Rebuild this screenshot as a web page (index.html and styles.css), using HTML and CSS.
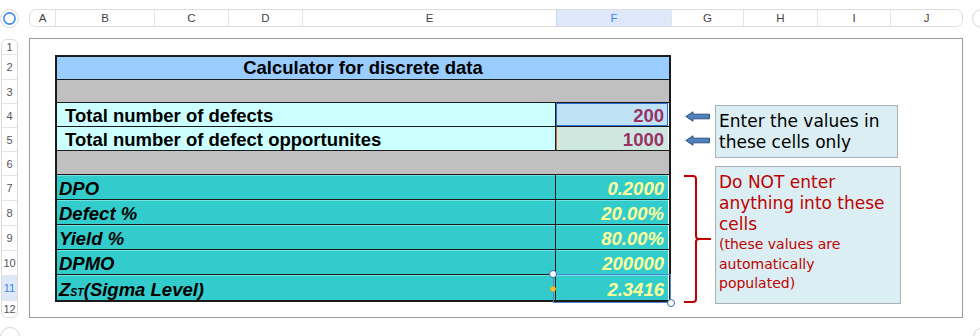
FILE: index.html
```html
<!DOCTYPE html>
<html>
<head>
<meta charset="utf-8">
<link rel="stylesheet" href="styles.css">
</head>
<body>
<div class="topbar">
  <svg class="corner" width="19" height="19" viewBox="0 0 19 19">
    <circle cx="9.5" cy="9.5" r="9" fill="#fff" stroke="#dadada" stroke-width="1"/>
    <circle cx="9.5" cy="9.5" r="5.6" fill="#fff" stroke="#3d8af0" stroke-width="1.6"/>
  </svg>
  <div class="colhead">
    <div class="ch c-a">A</div>
    <div class="ch c-b">B</div>
    <div class="ch c-c">C</div>
    <div class="ch c-d">D</div>
    <div class="ch c-e">E</div>
    <div class="ch c-f sel">F</div>
    <div class="ch c-g">G</div>
    <div class="ch c-h">H</div>
    <div class="ch c-i">I</div>
    <div class="ch c-j">J</div>
  </div>
  <div class="round-btn"></div>
</div>

<div class="main">
  <div class="rowhead">
    <div class="rh r1">1</div>
    <div class="rh r25">2</div>
    <div class="rh r24">3</div>
    <div class="rh r24">4</div>
    <div class="rh r24">5</div>
    <div class="rh r24">6</div>
    <div class="rh r25">7</div>
    <div class="rh r25">8</div>
    <div class="rh r25">9</div>
    <div class="rh r25">10</div>
    <div class="rh r25 sel">11</div>
    <div class="rh r12">12</div>
  </div>

  <div class="sheet">
    <div class="calc">
      <div class="row title">Calculator for discrete data</div>
      <div class="row gray g3"></div>
      <div class="row input">
        <div class="lab">Total number of defects</div>
        <div class="val v-blue">200</div>
      </div>
      <div class="row input">
        <div class="lab">Total number of defect opportunites</div>
        <div class="val v-green">1000</div>
      </div>
      <div class="row gray g6"></div>
      <div class="row out">
        <div class="lab">DPO</div>
        <div class="val">0.2000</div>
      </div>
      <div class="row out">
        <div class="lab">Defect %</div>
        <div class="val">20.00%</div>
      </div>
      <div class="row out">
        <div class="lab">Yield %</div>
        <div class="val">80.00%</div>
      </div>
      <div class="row out">
        <div class="lab">DPMO</div>
        <div class="val">200000</div>
      </div>
      <div class="row out last">
        <div class="lab"><span>Z<span class="sub">ST</span>(Sigma Level)</span></div>
        <div class="val selected">2.3416
          <div class="selbox">
            <span class="handle h-tl"></span>
            <span class="handle h-ml"></span>
            <span class="handle h-br"></span>
          </div>
        </div>
      </div>
    </div>

    <div class="notes">
      <div class="note">
        <div class="arrows">
          <svg width="26" height="11" viewBox="0 0 26 11"><path d="M0.8 5.5 L8 0.8 V3.2 H24.5 V7.8 H8 V10.2 Z" fill="#4f81bd" stroke="#2f527f" stroke-width="1" stroke-linejoin="round"/></svg>
          <svg width="26" height="11" viewBox="0 0 26 11"><path d="M0.8 5.5 L8 0.8 V3.2 H24.5 V7.8 H8 V10.2 Z" fill="#4f81bd" stroke="#2f527f" stroke-width="1" stroke-linejoin="round"/></svg>
        </div>
        <div class="box box1">Enter the values in these cells only</div>
      </div>
      <div class="note">
        <svg class="bracket" width="31" height="138" viewBox="0 0 31 138">
          <path d="M0 10 H9 Q12 10 12 13 V70 Q12 73 15 73 H27 M15 73 Q12 73 12 76 V133 Q12 136 9 136 H0" fill="none" stroke="#c00000" stroke-width="2"/>
        </svg>
        <div class="box box2">
          <div class="big">Do NOT enter<br>anything into these<br>cells</div>
          <div class="small">(these values are<br>automatically<br>populated)</div>
        </div>
      </div>
    </div>
  </div>
</div>

<div class="bottom">
  <div class="round-btn bl"></div>
  <div class="round-btn br"></div>
</div>
</body>
</html>
```

FILE: styles.css
```css
html, body {
  margin: 0;
  padding: 0;
}
body {
  width: 980px;
  height: 336px;
  overflow: hidden;
  background: #fff;
  font-family: "Liberation Sans", Arial, sans-serif;
}

/* ---------- top column header ---------- */
.topbar {
  display: flex;
  align-items: center;
  height: 18px;
  margin-top: 9px;
}
.corner {
  flex: none;
  display: block;
}
.colhead {
  flex: none;
  display: flex;
  margin-left: 10px;
  width: 934px;
  height: 18px;
  box-sizing: border-box;
  border: 1px solid #dcdcdc;
  border-radius: 7px;
  overflow: hidden;
}
.ch {
  box-sizing: border-box;
  display: flex;
  align-items: center;
  justify-content: center;
  font-size: 11.5px;
  color: #444;
  border-left: 1px solid #e4e4e4;
}
.ch.c-a { width: 25px; border-left: none; }
.ch.c-b { width: 99px; }
.ch.c-c { width: 74px; }
.ch.c-d { width: 74px; }
.ch.c-e { width: 254px; }
.ch.c-f { width: 115px; }
.ch.c-g { width: 72px; }
.ch.c-h { width: 74px; }
.ch.c-i { width: 73px; }
.ch.c-j { width: 72px; }
.ch.sel {
  background: #dde9fb;
  color: #3a86e8;
  border-left-color: #c5d8f3;
}
.round-btn {
  flex: none;
  width: 19px;
  height: 19px;
  box-sizing: border-box;
  border: 1px solid #d4d4d4;
  border-radius: 50%;
  background: #fff;
}
.topbar .round-btn {
  margin-left: 9px;
}

/* ---------- main ---------- */
.main {
  display: flex;
  margin-top: 11px;
}
.rowhead {
  flex: none;
  margin-left: 1px;
  margin-top: 1px;
  width: 17px;
  box-sizing: border-box;
  border: 1px solid #dcdcdc;
  border-radius: 6px;
  overflow: hidden;
  display: flex;
  flex-direction: column;
}
.rh {
  box-sizing: border-box;
  display: flex;
  align-items: center;
  justify-content: center;
  font-size: 11px;
  color: #555;
  border-top: 1px solid #e4e4e4;
}
.rh.r1 { height: 14px; border-top: none; }
.rh.r25 { height: 25px; }
.rh.r24 { height: 24px; }
.rh.r12 { height: 16px; }
.rh.sel {
  background: #dde9fb;
  color: #3a86e8;
}

.sheet {
  flex: none;
  margin-left: 11px;
  width: 934px;
  height: 280px;
  box-sizing: border-box;
  border: 1px solid #9c9c9c;
  display: flex;
  align-items: flex-start;
  padding: 16px 0 0 25px;
}

/* ---------- calculator table ---------- */
.calc {
  flex: none;
  width: 616px;
  box-sizing: border-box;
  border: 2px solid #1a1a1a;
  font-size: 18.5px;
  font-weight: bold;
  color: #000;
}
.row {
  display: flex;
  box-sizing: border-box;
  border-bottom: 1px solid #1a1a1a;
}
.row.title {
  height: 23px;
  background: #99ccff;
  justify-content: center;
  align-items: flex-end;
  line-height: 21px;
  padding-bottom: 1px;
}
.row.gray {
  background: #c0c0c0;
}
.row.g3 { height: 23px; }
.row.g6 { height: 24px; }
.row.input { height: 24px; }
.row.out { height: 25px; }
.row.last { border-bottom: none; }

.lab, .val {
  box-sizing: border-box;
  display: flex;
  align-items: flex-end;
  line-height: 21px;
  white-space: nowrap;
}
.lab {
  width: 499px;
  border-right: 1px solid #1a1a1a;
}
.val {
  width: 112px;
  justify-content: flex-end;
  padding-right: 4px;
}
.row.input .lab {
  background: #ccffff;
  padding-left: 8px;
}
.row.input .val {
  color: #993366;
}
.val.v-blue {
  background: #bfe3f5;
  box-shadow: inset 0 0 0 1px #2c6fd6;
}
.val.v-green {
  background: #cfe8df;
  box-shadow: inset 1px 0 0 #c8732f;
}
.row.out .lab,
.row.out .val {
  background: #33cccc;
  box-shadow: inset 0 1px 0 #74e2e2;
  font-style: italic;
}
.row.out .lab {
  padding-left: 2px;
}
.row.out .val {
  color: #ffff99;
}
.sub {
  font-size: 10.5px;
  line-height: 0;
}

/* selection overlay on F11 */
.val.selected {
  position: relative;
}
.selbox {
  position: absolute;
  left: -3px;
  top: -1px;
  right: -3px;
  bottom: -3px;
  border: 1px solid #4a84d2;
}
.handle {
  position: absolute;
  box-sizing: border-box;
  border-radius: 50%;
}
.h-tl, .h-br {
  width: 8px;
  height: 8px;
  background: #fff;
  border: 1.5px solid #3c6aa8;
}
.h-tl { left: -5px; top: -5px; }
.h-br { right: -5px; bottom: -5px; }
.h-ml {
  width: 6px;
  height: 6px;
  left: -4px;
  top: 11px;
  background: #f4c430;
  border: 1px solid #e0b020;
}

/* ---------- notes ---------- */
.notes {
  flex: none;
  margin-left: 13px;
  padding-top: 50px;
  display: flex;
  flex-direction: column;
  gap: 8px;
}
.note {
  display: flex;
  align-items: flex-start;
}
.arrows {
  width: 31px;
  box-sizing: border-box;
  padding: 6px 0 0 1px;
  display: flex;
  flex-direction: column;
  gap: 13px;
}
.arrows svg,
.bracket {
  display: block;
}
.box {
  box-sizing: border-box;
  border: 1px solid #a8b0b3;
  background: #daeef3;
  font-family: "DejaVu Sans", Verdana, sans-serif;
  padding: 5px 0 0 3px;
}
.box1 {
  width: 183px;
  height: 53px;
  font-size: 17px;
  line-height: 21px;
  color: #000;
}
.box2 {
  width: 186px;
  height: 138px;
  color: #c00000;
}
.box2 .big {
  font-size: 17px;
  line-height: 21px;
}
.box2 .small {
  font-size: 14px;
  line-height: 19.5px;
}

/* ---------- bottom buttons ---------- */
.bottom {
  display: flex;
  margin-top: 9px;
}
.bottom .round-btn {
  width: 20px;
  height: 20px;
}
.round-btn.br {
  margin-left: 953px;
}
```
